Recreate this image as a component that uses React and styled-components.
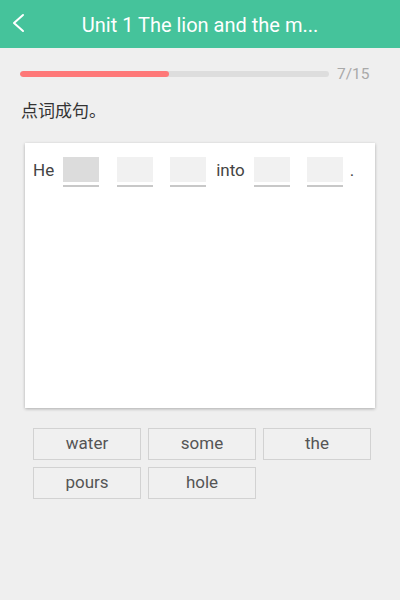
import React from "react";
import styled, { createGlobalStyle } from "styled-components";

const Global = createGlobalStyle`
  html, body { margin: 0; padding: 0; background: #efefef; }
  body { font-family: Roboto, "Noto Sans CJK SC", sans-serif; }
  #root { width: 400px; height: 600px; background: #efefef; }
`;

const Header = styled.header`
  height: 48px;
  background: #45c39b;
  display: flex;
  align-items: center;
  position: relative;
`;

const BackButton = styled.div`
  width: 48px;
  height: 48px;
  display: flex;
  align-items: center;
  justify-content: center;
  position: absolute;
  left: -6px;
  top: -1px;
`;

const Title = styled.h1`
  flex: 1;
  margin: 2px 0 0 0;
  text-align: center;
  color: #fff;
  font-weight: 400;
  font-size: 20px;
`;

const Body = styled.main`
  padding: 17px 20px 0 20px;
`;

const ProgressRow = styled.div`
  display: flex;
  align-items: center;
  gap: 8px;
  height: 18px;
`;

const Track = styled.div`
  width: 309px;
  height: 6px;
  border-radius: 3px;
  background: #dddddd;
  overflow: hidden;
`;

const Fill = styled.div`
  height: 100%;
  background: #fe7878;
  border-radius: 3px;
`;

const Count = styled.span`
  font-size: 15.5px;
  color: #a9a9a9;
`;

const Prompt = styled.div`
  margin-top: 16px;
  font-size: 17px;
  color: #333;
  font-family: "Noto Sans CJK SC", sans-serif;
  line-height: 22px;
  padding-left: 1px;
`;

const Card = styled.div`
  margin: 22px 5px 0 5px;
  height: 265px;
  background: #fff;
  box-shadow: 0 1px 3px rgba(0, 0, 0, 0.28);
  padding: 16px 8px 0 8px;
  box-sizing: border-box;
  display: flex;
  align-items: flex-start;
`;

const Word = styled.span`
  font-size: 17px;
  color: #444;
  line-height: 22px;
  margin-right: ${p => p.$mr || 0}px;
`;

const SlotWrap = styled.div`
  display: flex;
  flex-direction: column;
  margin-right: ${p => p.$mr || 0}px;
  margin-top: -2px;
`;

const SlotBox = styled.div`
  width: 36px;
  height: 25px;
  background: ${p => (p.$active ? "#dcdcdc" : "#f1f1f1")};
`;

const SlotLine = styled.div`
  width: 36px;
  height: 1.5px;
  margin-top: 3px;
  background: #c8c8c8;
`;

const Choices = styled.div`
  margin: 20px 8px 0 13px;
  display: grid;
  grid-template-columns: repeat(3, 108px);
  column-gap: 7px;
  row-gap: 7px;
`;

const Choice = styled.button`
  height: 32px;
  background: #f0f0f0;
  border: 1px solid #d2d2d2;
  font-family: Roboto, sans-serif;
  font-size: 17px;
  color: #555;
  padding: 0;
  padding-bottom: 2px;
`;

const ChevronLeft = () => (
  <svg width="14" height="20" viewBox="0 0 14 20">
    <path d="M12 2 L3 10 L12 18" fill="none" stroke="#fff" strokeWidth="2" strokeLinecap="round" strokeLinejoin="round" />
  </svg>
);

export default function App() {
  const words = ["water", "some", "the", "pours", "hole"];
  const progress = 7 / 15;
  return (
    <>
      <Global />
      <Header>
        <BackButton>
          <ChevronLeft />
        </BackButton>
        <Title>Unit 1 The lion and the m...</Title>
      </Header>
      <Body>
        <ProgressRow>
          <Track>
            <Fill style={{ width: `calc(${progress * 100}% + 5px)` }} />
          </Track>
          <Count>7/15</Count>
        </ProgressRow>
        <Prompt>点词成句。</Prompt>
        <Card>
          <Word $mr={9}>He</Word>
          <SlotWrap $mr={18}><SlotBox $active /><SlotLine /></SlotWrap>
          <SlotWrap $mr={17}><SlotBox /><SlotLine /></SlotWrap>
          <SlotWrap $mr={10}><SlotBox /><SlotLine /></SlotWrap>
          <Word $mr={9}>into</Word>
          <SlotWrap $mr={17}><SlotBox /><SlotLine /></SlotWrap>
          <SlotWrap $mr={7}><SlotBox /><SlotLine /></SlotWrap>
          <Word>.</Word>
        </Card>
        <Choices>
          {words.map(w => (
            <Choice key={w}>{w}</Choice>
          ))}
        </Choices>
      </Body>
    </>
  );
}
